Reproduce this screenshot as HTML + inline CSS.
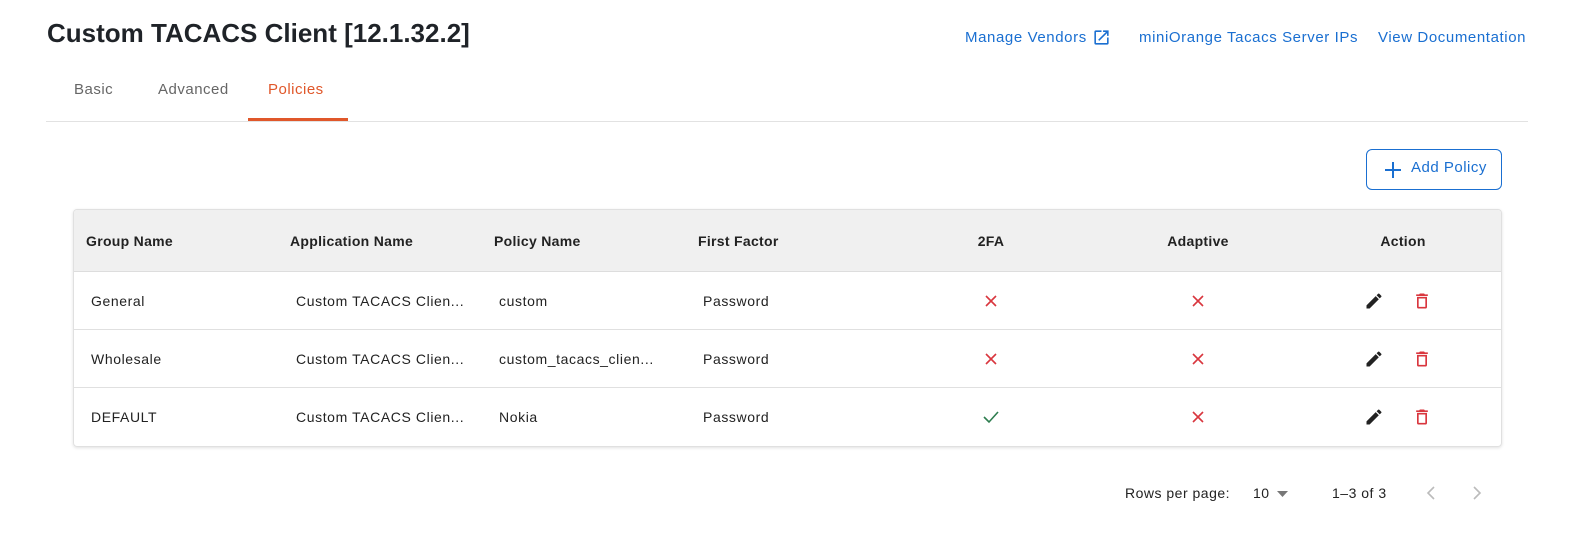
<!DOCTYPE html>
<html><head><style>
*{margin:0;padding:0;box-sizing:border-box}
body{width:1580px;height:545px;background:#fff;font-family:"Liberation Sans",sans-serif;color:#222;position:relative;overflow:hidden;letter-spacing:0.5px}
.a{position:absolute;white-space:nowrap}
h1{position:absolute;left:47px;top:18px;font-size:26px;font-weight:bold;color:#1f2328;letter-spacing:0}
.lnk{color:#1a6fd1;font-size:15px;top:29px;letter-spacing:0.6px}
.tab{font-size:15px;top:81px;color:#666}
.tbl{position:absolute;left:73px;top:209px;width:1429px;height:238px;border:1px solid #e0e0e0;border-radius:4px;box-shadow:0 1px 3px rgba(0,0,0,.12);overflow:hidden}
.hd{position:absolute;left:0;top:0;width:100%;height:62px;background:#f0f0f0;border-bottom:1px solid #ddd}
.row{position:absolute;left:0;width:100%;height:58px;border-bottom:1px solid #e0e0e0}
.th{font-size:14px;font-weight:bold;top:23px;color:#222;letter-spacing:0.3px}
.td{font-size:14px;top:21px;color:#222;letter-spacing:0.6px}
.c{transform:translateX(-50%)}
</style></head><body>
<h1>Custom TACACS Client [12.1.32.2]</h1>
<div class="a lnk" style="left:965px">Manage Vendors</div>
<svg class="a" style="left:1092px;top:28px" width="19" height="19" viewBox="0 0 24 24"><path d="M19 19H5V5h7V3H5a2 2 0 0 0-2 2v14a2 2 0 0 0 2 2h14a2 2 0 0 0 2-2v-7h-2v7zM14 3v2h3.6l-9.8 9.8 1.4 1.4L19 6.4V10h2V3h-7z" fill="#1a6fd1"/></svg>
<div class="a lnk" style="left:1139px">miniOrange Tacacs Server IPs</div>
<div class="a lnk" style="left:1378px">View Documentation</div>
<div class="a tab" style="left:74px">Basic</div>
<div class="a tab" style="left:158px">Advanced</div>
<div class="a tab" style="left:268px;color:#e0572a">Policies</div>
<div class="a" style="left:248px;top:118px;width:100px;height:3px;background:#e0572a"></div>
<div class="a" style="left:46px;top:121px;width:1482px;height:1px;background:#e2e2e2"></div>
<div class="a" style="left:1366px;top:149px;width:136px;height:41px;border:1px solid #1a6fd1;border-radius:6px"></div>
<svg class="a" style="left:1383px;top:160px" width="20" height="20" viewBox="0 0 20 20"><path d="M10 2v16M2 10h16" stroke="#1a6fd1" stroke-width="2"/></svg>
<div class="a" style="left:1411px;top:159px;font-size:15px;color:#1a6fd1">Add Policy</div>
<div class="tbl">
<div class="hd">
<div class="a th" style="left:12px">Group Name</div>
<div class="a th" style="left:216px">Application Name</div>
<div class="a th" style="left:420px">Policy Name</div>
<div class="a th" style="left:624px">First Factor</div>
<div class="a th c" style="left:917px">2FA</div>
<div class="a th c" style="left:1124px">Adaptive</div>
<div class="a th c" style="left:1329px">Action</div>
</div>
<div class="row" style="top:62px">
<div class="a td" style="left:17px">General</div><div class="a td" style="left:222px">Custom TACACS Clien...</div><div class="a td" style="left:425px">custom</div><div class="a td" style="left:629px">Password</div>
<svg class="a" style="left:911px;top:23px" width="12" height="12"><path d="M1 1l10 10M11 1L1 11" stroke="#d9363e" stroke-width="1.6"/></svg>
<svg class="a" style="left:1118px;top:23px" width="12" height="12"><path d="M1 1l10 10M11 1L1 11" stroke="#d9363e" stroke-width="1.6"/></svg>
<svg class="a" style="left:1290px;top:19px" width="20" height="20" viewBox="0 0 24 24"><path d="M3 17.25V21h3.75L17.8 9.94l-3.75-3.75L3 17.25zM20.7 7.04a1 1 0 0 0 0-1.41l-2.34-2.34a1 1 0 0 0-1.41 0l-1.83 1.83 3.75 3.75 1.83-1.83z" fill="#222"/></svg>
<svg class="a" style="left:1338px;top:19px" width="20" height="20" viewBox="0 0 24 24"><path d="M6 19a2 2 0 0 0 2 2h8a2 2 0 0 0 2-2V7H6v12zm2-10h8v10H8V9zm7.5-5l-1-1h-5l-1 1H5v2h14V4z" fill="#d9363e"/></svg>
</div>
<div class="row" style="top:120px">
<div class="a td" style="left:17px">Wholesale</div><div class="a td" style="left:222px">Custom TACACS Clien...</div><div class="a td" style="left:425px">custom_tacacs_clien...</div><div class="a td" style="left:629px">Password</div>
<svg class="a" style="left:911px;top:23px" width="12" height="12"><path d="M1 1l10 10M11 1L1 11" stroke="#d9363e" stroke-width="1.6"/></svg>
<svg class="a" style="left:1118px;top:23px" width="12" height="12"><path d="M1 1l10 10M11 1L1 11" stroke="#d9363e" stroke-width="1.6"/></svg>
<svg class="a" style="left:1290px;top:19px" width="20" height="20" viewBox="0 0 24 24"><path d="M3 17.25V21h3.75L17.8 9.94l-3.75-3.75L3 17.25zM20.7 7.04a1 1 0 0 0 0-1.41l-2.34-2.34a1 1 0 0 0-1.41 0l-1.83 1.83 3.75 3.75 1.83-1.83z" fill="#222"/></svg>
<svg class="a" style="left:1338px;top:19px" width="20" height="20" viewBox="0 0 24 24"><path d="M6 19a2 2 0 0 0 2 2h8a2 2 0 0 0 2-2V7H6v12zm2-10h8v10H8V9zm7.5-5l-1-1h-5l-1 1H5v2h14V4z" fill="#d9363e"/></svg>
</div>
<div class="row" style="top:178px;border-bottom:none">
<div class="a td" style="left:17px">DEFAULT</div><div class="a td" style="left:222px">Custom TACACS Clien...</div><div class="a td" style="left:425px">Nokia</div><div class="a td" style="left:629px">Password</div>
<svg class="a" style="left:909px;top:22px" width="16" height="14"><path d="M1 7l5 5L15 2" stroke="#2e7d4f" stroke-width="1.6" fill="none"/></svg>
<svg class="a" style="left:1118px;top:23px" width="12" height="12"><path d="M1 1l10 10M11 1L1 11" stroke="#d9363e" stroke-width="1.6"/></svg>
<svg class="a" style="left:1290px;top:19px" width="20" height="20" viewBox="0 0 24 24"><path d="M3 17.25V21h3.75L17.8 9.94l-3.75-3.75L3 17.25zM20.7 7.04a1 1 0 0 0 0-1.41l-2.34-2.34a1 1 0 0 0-1.41 0l-1.83 1.83 3.75 3.75 1.83-1.83z" fill="#222"/></svg>
<svg class="a" style="left:1338px;top:19px" width="20" height="20" viewBox="0 0 24 24"><path d="M6 19a2 2 0 0 0 2 2h8a2 2 0 0 0 2-2V7H6v12zm2-10h8v10H8V9zm7.5-5l-1-1h-5l-1 1H5v2h14V4z" fill="#d9363e"/></svg>
</div>
</div>
<div class="a" style="left:1125px;top:485px;font-size:14px">Rows per page:</div>
<div class="a" style="left:1253px;top:485px;font-size:14px">10</div>
<svg class="a" style="left:1277px;top:491px" width="12" height="6"><path d="M0 0h11L5.5 6z" fill="#777"/></svg>
<div class="a" style="left:1332px;top:485px;font-size:14px">1–3 of 3</div>
<svg class="a" style="left:1426px;top:486px" width="10" height="14"><path d="M8 1L2 7l6 6" stroke="#bbb" stroke-width="1.6" fill="none"/></svg>
<svg class="a" style="left:1472px;top:486px" width="10" height="14"><path d="M2 1l6 6-6 6" stroke="#bbb" stroke-width="1.6" fill="none"/></svg>
</body></html>
